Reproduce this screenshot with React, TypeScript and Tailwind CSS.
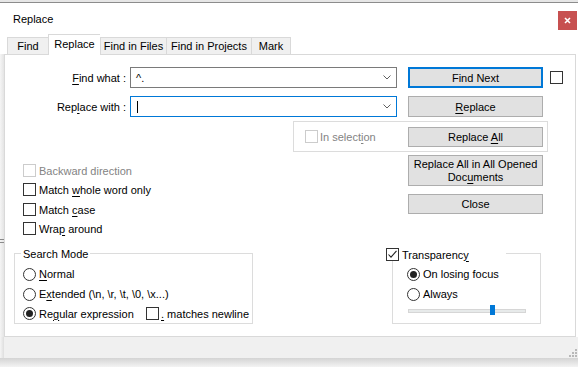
import React from "react";

const U = ({ children }: { children: React.ReactNode }) => (
  <span className="underline underline-offset-[2px] decoration-[1px]">{children}</span>
);

function CheckBox({ checked, disabled }: { checked?: boolean; disabled?: boolean }) {
  return (
    <div
      className={`w-[13px] h-[13px] shrink-0 border bg-white flex items-center justify-center ${
        disabled ? "border-[#cccccc]" : "border-[#333333]"
      }`}
    >
      {checked && (
        <svg width="11" height="11" viewBox="0 0 11 11">
          <path d="M1.5 5.5 L4 8.2 L9.5 1.8" fill="none" stroke="#222222" strokeWidth="1.1" />
        </svg>
      )}
    </div>
  );
}

function Radio({ checked }: { checked?: boolean }) {
  return (
    <div className="w-[13px] h-[13px] shrink-0 rounded-full border border-[#333333] bg-white flex items-center justify-center">
      {checked && <div className="w-[7px] h-[7px] rounded-full bg-[#222222]" />}
    </div>
  );
}

function Combo({ value, focused, caret }: { value?: string; focused?: boolean; caret?: boolean }) {
  return (
    <div
      className={`ml-[4px] w-[267px] h-[21px] border bg-white flex items-center ${
        focused ? "border-[#0078d7]" : "border-[#7a7a7a]"
      }`}
    >
      <div className="flex-1 flex items-center pl-[5px]">
        {value && <span>{value}</span>}
        {caret && <div className="ml-[1px] w-[1px] h-[12px] bg-black" />}
      </div>
      <svg className="mr-[5px]" width="8" height="5" viewBox="0 0 8 5">
        <polyline points="0.5,0.5 4,4 7.5,0.5" fill="none" stroke="#606060" strokeWidth="1" />
      </svg>
    </div>
  );
}

function Tab({ label, w, active, last }: { label: string; w: number; active?: boolean; last?: boolean }) {
  const width: Record<number, string> = {
    41: "w-[41px]",
    52: "w-[52px]",
    66: "w-[66px]",
    85: "w-[85px]",
    40: "w-[40px]",
  };
  return (
    <div
      className={`${width[w]} flex items-center justify-center border-t border-l border-[#d9d9d9] ${
        last ? "border-r" : ""
      } ${active ? "h-[21px] -mb-[1px] bg-white relative z-10 pb-[2px]" : "h-[17px] bg-[#f0f0f0]"}`}
    >
      {label}
    </div>
  );
}

export default function App() {
  return (
    <div className="w-[578px] h-[367px] overflow-hidden bg-white flex flex-col font-['Liberation_Sans',Arial,sans-serif] text-[11px] leading-[14px] text-black">
      {/* window top edge */}
      <div className="h-[2px] shrink-0 bg-[#e6e6e6]" />
      <div className="h-[1px] shrink-0 bg-[#8c8c8c]" />

      {/* title bar */}
      <div className="h-[31px] shrink-0 flex items-start">
        <span className="ml-[13px] mt-[9px]">Replace</span>
        <div className="ml-auto mr-[1px] mt-[8px] w-[19px] h-[19px] bg-[#c75050] flex items-center justify-center">
          <svg width="7" height="7" viewBox="0 0 7 7">
            <path d="M1 1 L6 6 M6 1 L1 6" stroke="#ffffff" strokeWidth="1.6" />
          </svg>
        </div>
      </div>

      {/* tabs */}
      <div className="h-[20px] shrink-0 flex items-end pl-[7px]">
        <Tab label="Find" w={41} />
        <Tab label="Replace" w={52} active />
        <Tab label="Find in Files" w={66} />
        <Tab label="Find in Projects" w={85} />
        <Tab label="Mark" w={40} last />
      </div>

      {/* body */}
      <div className="h-[283px] shrink-0 flex">
        <div className="w-[4px] shrink-0 bg-gradient-to-r from-[#f5f5f5] to-[#e4e4e4] flex flex-col">
          <div className="h-[185px]" />
          <div className="h-[1px] bg-[#8a8a8a]" />
          <div className="h-[2px]" />
          <div className="h-[1px] bg-[#8a8a8a]" />
        </div>
        <div className="w-[572px] h-[283px] border border-[#d9d9d9] bg-white flex flex-col">
          {/* Find what */}
          <div className="mt-[12px] h-[21px] flex items-center">
            <div className="w-[121px] text-right">
              <U>F</U>ind what :
            </div>
            <Combo value="^." />
            <div className="ml-[11px] w-[135px] h-[21px] border-2 border-[#0078d7] bg-[#e1e1e1] flex items-center justify-center">
              Find Next
            </div>
            <div className="ml-[7px]">
              <CheckBox />
            </div>
          </div>

          {/* Replace with */}
          <div className="mt-[8px] h-[21px] flex items-center">
            <div className="w-[121px] text-right">
              Rep<U>l</U>ace with :
            </div>
            <Combo focused caret />
            <div className="ml-[11px] w-[135px] h-[21px] border border-[#adadad] bg-[#e1e1e1] flex items-center justify-center">
              <span>
                <U>R</U>eplace
              </span>
            </div>
          </div>

          {/* In selection group */}
          <div className="mt-[4px] ml-[288px] w-[255px] h-[31px] border border-[#dcdcdc] flex items-center">
            <div className="ml-[11px]">
              <CheckBox disabled />
            </div>
            <span className="ml-[2px] text-[#838383]">
              In select<U>i</U>on
            </span>
            <div className="ml-auto mr-[4px] w-[135px] h-[20px] border border-[#adadad] bg-[#e1e1e1] flex items-center justify-center">
              <span>
                Replace <U>A</U>ll
              </span>
            </div>
          </div>

          {/* options + buttons */}
          <div className="h-[96px] flex">
            <div className="ml-[18px] w-[385px] pt-[12px] flex flex-col">
              <div className="h-[13px] flex items-center">
                <CheckBox disabled />
                <span className="ml-[3px] text-[#838383]">Backward direction</span>
              </div>
              <div className="mt-[6px] h-[13px] flex items-center">
                <CheckBox />
                <span className="ml-[3px]">
                  Match <U>w</U>hole word only
                </span>
              </div>
              <div className="mt-[7px] h-[13px] flex items-center">
                <CheckBox />
                <span className="ml-[3px]">
                  Match <U>c</U>ase
                </span>
              </div>
              <div className="mt-[6px] h-[13px] flex items-center">
                <CheckBox />
                <span className="ml-[3px]">
                  Wra<U>p</U> around
                </span>
              </div>
            </div>
            <div className="pt-[3px] flex flex-col">
              <div className="w-[135px] h-[31px] border border-[#adadad] bg-[#e1e1e1] flex items-center justify-center text-center leading-[13px]">
                <span>
                  Replace All in All Opened
                  <br />
                  Doc<U>u</U>ments
                </span>
              </div>
              <div className="mt-[8px] w-[135px] h-[20px] border border-[#adadad] bg-[#e1e1e1] flex items-center justify-center">
                Close
              </div>
            </div>
          </div>

          {/* group boxes */}
          <div className="h-[75px] flex">
            {/* Search mode */}
            <div className="relative ml-[9px] mt-[5px] w-[239px] h-[71px] border border-[#dcdcdc] pl-[8px] pt-[10px] flex flex-col">
              <span className="absolute left-[6px] -top-[7px] px-[2px] bg-white">Search Mode</span>
              <div className="h-[20px] flex items-center">
                <Radio />
                <span className="ml-[3px]">
                  <U>N</U>ormal
                </span>
              </div>
              <div className="h-[20px] flex items-center">
                <Radio />
                <span className="ml-[3px]">
                  E<U>x</U>tended (\n, \r, \t, \0, \x...)
                </span>
              </div>
              <div className="h-[19px] flex items-center">
                <Radio checked />
                <span className="ml-[3px] w-[107px]">
                  Re<U>g</U>ular expression
                </span>
                <CheckBox />
                <span className="ml-[2px]">
                  <U>.</U> matches newline
                </span>
              </div>
            </div>

            {/* Transparency */}
            <div className="relative ml-[139px] mt-[5px] w-[149px] h-[71px] border border-[#dcdcdc] pl-[14px] pt-[10px] flex flex-col">
              <div className="absolute -left-[7px] -top-[6px] w-[120px] h-[13px] bg-white flex items-center">
                <CheckBox checked />
                <span className="ml-[3px]">
                  Transparenc<U>y</U>
                </span>
              </div>
              <div className="h-[20px] flex items-center">
                <Radio checked />
                <span className="ml-[3px]">On losing focus</span>
              </div>
              <div className="h-[20px] flex items-center">
                <Radio />
                <span className="ml-[3px]">Always</span>
              </div>
              <div className="relative mt-[1px] ml-[1px] w-[118px] h-[10px]">
                <div className="mt-[4px] h-[4px] bg-[#e7eaea] border border-[#d6d6d6]" />
                <div className="absolute left-[82px] top-0 w-[5px] h-[10px] bg-[#0078d7]" />
              </div>
            </div>
          </div>
        </div>
      </div>

      {/* status bar */}
      <div className="h-[21px] shrink-0 flex">
        <div className="w-[4px] shrink-0 bg-gradient-to-r from-[#f5f5f5] to-[#dedede]" />
        <div className="flex-1 bg-[#f0f0f0] flex justify-end items-end pr-[1px] pb-[1px]">
          <svg width="8" height="8" viewBox="0 0 8 8">
            <rect x="6" y="0" width="2" height="2" fill="#b8b8b8" />
            <rect x="3" y="3" width="2" height="2" fill="#b8b8b8" />
            <rect x="6" y="3" width="2" height="2" fill="#b8b8b8" />
            <rect x="0" y="6" width="2" height="2" fill="#b8b8b8" />
            <rect x="3" y="6" width="2" height="2" fill="#b8b8b8" />
            <rect x="6" y="6" width="2" height="2" fill="#b8b8b8" />
          </svg>
        </div>
      </div>
      <div className="h-[9px] shrink-0 bg-gradient-to-b from-[#d4d4d4] to-[#f3f3f3]" />
    </div>
  );
}
